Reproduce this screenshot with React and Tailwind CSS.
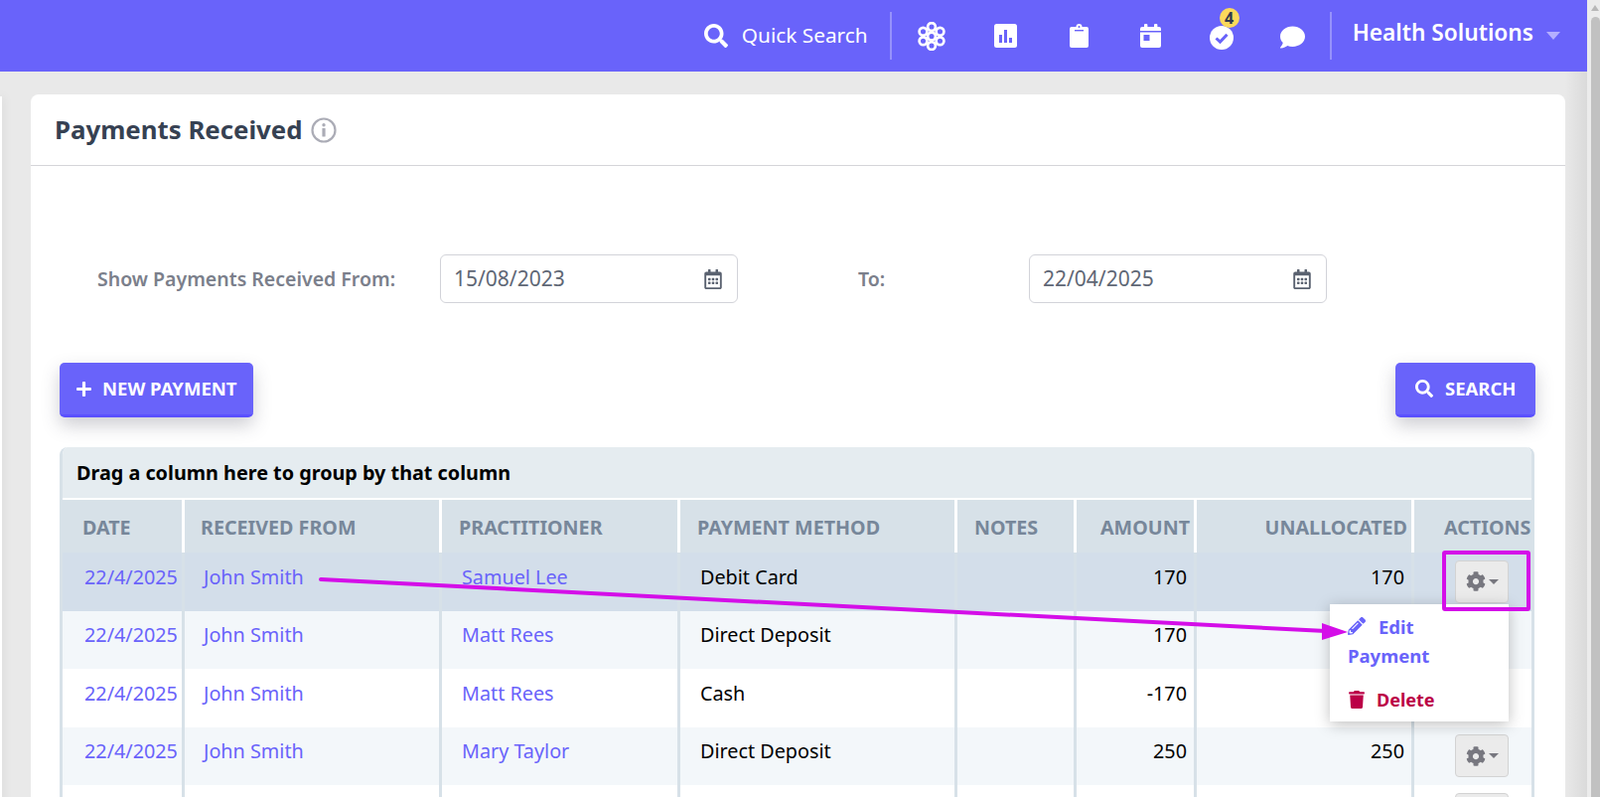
import { FaSearch, FaPlus, FaCog, FaPencilAlt, FaTrash, FaRegCalendarAlt, FaComment } from "react-icons/fa";

const rows = [
  { date: "22/4/2025", from: "John Smith", practitioner: "Samuel Lee", method: "Debit Card", amount: "170", unallocated: "170" },
  { date: "22/4/2025", from: "John Smith", practitioner: "Matt Rees", method: "Direct Deposit", amount: "170", unallocated: "" }, // covered by the menu
  { date: "22/4/2025", from: "John Smith", practitioner: "Matt Rees", method: "Cash", amount: "-170", unallocated: "" }, // covered by the menu
  { date: "22/4/2025", from: "John Smith", practitioner: "Mary Taylor", method: "Direct Deposit", amount: "250", unallocated: "250" },
  { date: "", from: "", practitioner: "", method: "", amount: "", unallocated: "" }, // only its button is in frame
];

const gridCols = "grid grid-cols-[120px_259px_240px_279px_120px_121px_219px_1fr]";

// Honeycomb icon in the top bar
const FlowerIcon = () => (
  <svg width="28" height="29" viewBox="0 0 28 29" fill="none" stroke="white" strokeWidth="2.7">
    <circle cx="14" cy="5" r="3.9" />
    <circle cx="14" cy="14.5" r="3.9" />
    <circle cx="14" cy="24" r="3.9" />
    <circle cx="5.5" cy="9.7" r="3.9" />
    <circle cx="22.5" cy="9.7" r="3.9" />
    <circle cx="5.5" cy="19.3" r="3.9" />
    <circle cx="22.5" cy="19.3" r="3.9" />
  </svg>
);

const ChartIcon = () => (
  <svg width="23" height="24" viewBox="0 0 23 24">
    <rect width="23" height="24" rx="2.5" fill="white" />
    <rect x="5" y="11" width="3" height="8" fill="#6963fa" />
    <rect x="10" y="6" width="3" height="13" fill="#6963fa" />
    <rect x="15" y="14" width="3" height="5" fill="#6963fa" />
  </svg>
);

const ClipboardIcon = () => (
  <svg width="19" height="24" viewBox="0 0 19 24">
    <path d="M2 3h4.5a3 3 0 0 1 6 0H17a2 2 0 0 1 2 2v17a2 2 0 0 1-2 2H2a2 2 0 0 1-2-2V5a2 2 0 0 1 2-2z" fill="white" />
    <rect x="5" y="6" width="9" height="1.4" fill="#6963fa" />
    <circle cx="9.5" cy="3" r="1" fill="#6963fa" />
  </svg>
);

const CalendarIcon = () => (
  <svg width="21" height="24" viewBox="0 0 21 24">
    <rect x="4" y="0" width="3.4" height="5" rx="1" fill="white" />
    <rect x="14" y="0" width="3.4" height="5" rx="1" fill="white" />
    <path d="M2 3h17a2 2 0 0 1 2 2v2H0V5a2 2 0 0 1 2-2z" fill="white" />
    <path d="M0 8.4h21V22a2 2 0 0 1-2 2H2a2 2 0 0 1-2-2z" fill="white" />
    <rect x="3.5" y="11" width="6" height="6" fill="#6963fa" />
  </svg>
);

const CheckIcon = () => (
  <svg width="24" height="24" viewBox="0 0 24 24">
    <circle cx="12" cy="12" r="12" fill="white" />
    <path d="M6.5 12.5l4 3.6 7-7.4" fill="none" stroke="#6963fa" strokeWidth="3" />
  </svg>
);

const InfoIcon = () => (
  <svg width="26" height="26" viewBox="0 0 26 26" className="ml-[8px]">
    <circle cx="13" cy="13" r="11.5" fill="none" stroke="#abacb6" strokeWidth="2.2" />
    <circle cx="13" cy="7.8" r="1.7" fill="#abacb6" />
    <rect x="11.4" y="11" width="3.2" height="8.6" rx="0.6" fill="#abacb6" />
  </svg>
);

const DateInput = ({ value, className }) => (
  <div className={`flex h-[49px] items-center justify-between rounded-md border border-[#d2d3d9] pl-[13px] pr-[14px] text-[21px] text-[#5f6775] ${className}`}>
    <span>{value}</span>
    <FaRegCalendarAlt className="text-[20px] text-[#5a6270]" />
  </div>
);

const PrimaryButton = ({ icon, label, className }) => (
  <button className={`flex h-[55px] items-center rounded-[5px] border-b-[3px] border-[#5a50ff] bg-[#6963fa] text-[18.5px] font-bold text-white shadow-[0_8px_18px_rgba(60,60,80,0.25)] ${className}`}>
    {icon}
    {label}
  </button>
);

const GearMenu = ({ open }) => (
  <div className="relative ml-[41px] w-[54px]">
    <button className="flex h-[43px] w-[54px] items-center justify-center rounded-[4px] border border-[#d3d3d3] bg-[#ebebeb] text-[#77777f]">
      <FaCog className="text-[20px]" />
      <span className="ml-[3px] h-0 w-0 border-x-[5px] border-t-[5px] border-x-transparent border-t-[#77777f]" />
    </button>
    {open && (
      <div className="absolute right-0 top-[44px] z-10 h-[118px] w-[180px] bg-white pl-[18px] pt-[8px] text-[18.5px] font-bold leading-[29px] text-[#6963fa] shadow-[0_3px_14px_rgba(0,0,0,0.25)]">
        <div>
          <FaPencilAlt className="mr-[13px] inline align-[-1px] text-[18px]" />
          Edit
          <br />
          Payment
        </div>
        <div className="mt-[16px] flex items-center text-[18px] text-[#bb0047]">
          <FaTrash className="mr-[11px] text-[18px]" />
          Delete
        </div>
      </div>
    )}
  </div>
);

const Row = ({ row, index }) => {
  const rowBg = index === 0 ? "bg-[#d3deea]" : index % 2 === 1 ? "bg-[#f3f7fa]" : "bg-white";
  const cell = "flex items-center border-l-[3px] border-[#d7e1e8]";
  return (
    <div className={`${gridCols} h-[58.5px] text-[19.8px] leading-[30px] ${rowBg}`}>
      <a className="flex items-center pb-[9px] pl-[22px] text-[#6963fa]">{row.date}</a>
      <a className={`${cell} pb-[9px] pl-[19px] text-[#6963fa]`}>{row.from}</a>
      <a className={`${cell} pb-[9px] pl-[20px] text-[#6963fa]`}>{row.practitioner}</a>
      <div className={`${cell} pb-[9px] pl-[20px] text-black`}>{row.method}</div>
      <div className={cell} />
      <div className={`${cell} justify-end pb-[9px] pr-[7px] text-black`}>{row.amount}</div>
      <div className={`${cell} justify-end pb-[9px] pr-[7px] text-black`}>{row.unallocated}</div>
      <div className={cell}>
        <GearMenu open={index === 0} />
      </div>
    </div>
  );
};

const App = () => {
  const headCell = "flex items-center border-l-[3px] border-white pt-[3px]";
  return (
    <div className="relative flex h-[802px] w-[1611px] overflow-hidden font-['Open_Sans',sans-serif]">
      <div className="flex w-[1598px] flex-col bg-[#e9e9e9]">
        {/* Top bar */}
        <header className="flex h-[72px] shrink-0 items-center justify-end bg-[#6963fa] pr-[27px] text-white">
          <FaSearch className="text-[24px]" />
          <span className="ml-[14px] text-[20.8px]">Quick Search</span>
          <div className="ml-[22px] h-[48px] w-[2px] bg-white/30" />
          <div className="ml-[26px]"><FlowerIcon /></div>
          <div className="ml-[49px]"><ChartIcon /></div>
          <div className="ml-[53px]"><ClipboardIcon /></div>
          <div className="ml-[52px]"><CalendarIcon /></div>
          <div className="relative ml-[49px] mt-[4px]">
            <CheckIcon />
            <span className="absolute left-[10px] top-[-18px] flex h-[20px] w-[20px] items-center justify-center rounded-full bg-[#fcd95b] text-[16px] font-bold text-[#333a4d]">4</span>
          </div>
          <FaComment className="ml-[47px] mt-[2px] text-[25px]" />
          <div className="ml-[25px] h-[48px] w-[2px] bg-white/30" />
          <span className="mb-[5px] ml-[21px] text-[22.7px] font-semibold">Health Solutions</span>
          <span className="ml-[13px] h-0 w-0 border-x-[7px] border-t-[8px] border-x-transparent border-t-[#b5afff]" />
        </header>

        <div className="flex flex-1">
          {/* Collapsed side panel edge */}
          <div className="mt-[25px] w-[2px] shrink-0 bg-white shadow-[0_0_10px_rgba(0,0,0,0.18)]" />

          {/* Card */}
          <main className="ml-[29px] mt-[23px] w-[1545px] shrink-0 rounded-t-lg bg-white">
            <div className="flex h-[72px] items-center border-b border-[#d5d5d9] pl-[24px]">
              <h1 className="text-[25.8px] font-bold text-[#364152]">Payments Received</h1>
              <InfoIcon />
            </div>

            <div className="pl-[29px] pr-[31px] pt-[89px]">
              {/* Date filters */}
              <div className="flex items-center text-[19.5px] font-semibold text-[#7b7f8b]">
                <label className="w-[383px] pl-[38px]">Show Payments Received From:</label>
                <DateInput value="15/08/2023" className="w-[300px] font-normal" />
                <label className="ml-[121px] w-[172px]">To:</label>
                <DateInput value="22/04/2025" className="w-[300px] font-normal" />
              </div>

              {/* Buttons */}
              <div className="mt-[60px] flex justify-between">
                <PrimaryButton
                  className="w-[195px] pl-[16px]"
                  icon={<FaPlus className="mr-[10px] text-[17px]" />}
                  label="NEW PAYMENT"
                />
                <PrimaryButton
                  className="mr-[-1px] w-[141px] pl-[20px]"
                  icon={<FaSearch className="mr-[12px] text-[18px]" />}
                  label="SEARCH"
                />
              </div>

              {/* Grid */}
              <div className="mt-[30px] overflow-hidden rounded-t-lg border-x-[3px] border-[#d7e1e8]">
                <div className="flex h-[53px] items-center border-b-2 border-white bg-[#e5ecf0] pl-[14px] text-[19.8px] font-bold text-black">
                  Drag a column here to group by that column
                </div>
                <div className={`${gridCols} h-[53px] bg-[#d7e1e8] text-[19.7px] font-bold text-[#77879a]`}>
                  <div className="flex items-center pl-[20px] pt-[3px]">DATE</div>
                  <div className={`${headCell} pl-[16px]`}>RECEIVED FROM</div>
                  <div className={`${headCell} pl-[17px]`}>PRACTITIONER</div>
                  <div className={`${headCell} pl-[17px]`}>PAYMENT METHOD</div>
                  <div className={`${headCell} pl-[17px]`}>NOTES</div>
                  <div className={`${headCell} justify-end pr-[4px]`}>AMOUNT</div>
                  <div className={`${headCell} justify-end pr-[4px]`}>UNALLOCATED</div>
                  <div className={`${headCell} pl-[30px]`}>ACTIONS</div>
                </div>
                {rows.map((row, i) => (
                  <Row key={i} row={row} index={i} />
                ))}
              </div>
            </div>
          </main>

          <div className="ml-auto w-[22px] bg-gradient-to-r from-[#e9e9e9] to-[#dadada]" />
        </div>
      </div>

      {/* Browser scrollbar */}
      <div className="flex w-[13px] flex-col items-center bg-[#ececec] pl-[3px]">
        <span className="mt-[5px] h-0 w-0 border-x-[4px] border-b-[6px] border-x-transparent border-b-[#b8b8b8]" />
        <div className="mt-[6px] w-[9px] flex-1 rounded-t-full bg-[#c1c1c1]" />
      </div>

      {/* Annotation drawn over the screenshot */}
      <svg className="pointer-events-none absolute inset-0 z-20" width="1611" height="802" viewBox="0 0 1611 802">
        <rect x="1454" y="556" width="85" height="57" rx="1" fill="none" stroke="#d40ee8" strokeWidth="4" />
        <line x1="323" y1="583" x2="1335" y2="635" stroke="#d40ee8" strokeWidth="4" strokeLinecap="round" />
        <polygon points="1331,627 1357,636 1331,644" fill="#d40ee8" />
      </svg>
    </div>
  );
};

export default App;
